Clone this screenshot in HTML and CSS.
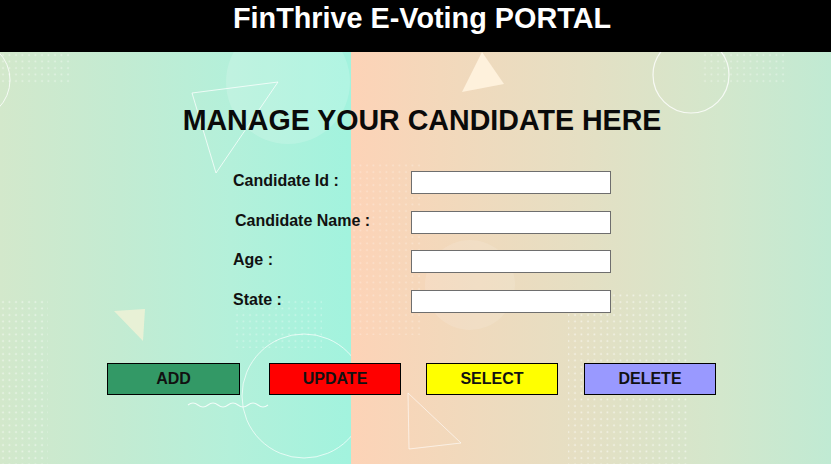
FILE: index.html
```html
<!DOCTYPE html>
<html lang="en">
<head>
<meta charset="utf-8">
<title>FinThrive E-Voting PORTAL</title>
<link rel="stylesheet" href="styles.css">
</head>
<body>
<header class="topbar">FinThrive E-Voting PORTAL</header>
<main class="stage">
  <svg class="decor" width="831" height="412" viewBox="0 52 831 412" aria-hidden="true">
    <defs>
      <pattern id="dots" width="6.5" height="6.5" patternUnits="userSpaceOnUse">
        <circle cx="3" cy="3" r="0.9" fill="#ffffff"/>
      </pattern>
      <clipPath id="leftHalf">
        <rect x="0" y="52" width="351" height="412"/>
      </clipPath>
      <clipPath id="rightHalf">
        <rect x="351" y="52" width="480" height="412"/>
      </clipPath>
    </defs>
    <g clip-path="url(#leftHalf)">
      <rect x="0" y="52" width="72" height="34" fill="url(#dots)" opacity="0.45"/>
      <rect x="0" y="300" width="48" height="164" fill="url(#dots)" opacity="0.55"/>
      <rect x="232" y="300" width="90" height="48" fill="url(#dots)" opacity="0.35"/>
      <circle cx="288" cy="82" r="62" fill="#ffffff" opacity="0.16"/>
      <circle cx="-30" cy="80" r="40" fill="none" stroke="#ffffff" stroke-width="1" opacity="0.8"/>
      <circle cx="304" cy="396" r="62" fill="none" stroke="#ffffff" stroke-width="1" opacity="0.7"/>
      <polygon points="192,93 278,82 216,173" fill="none" stroke="#ffffff" stroke-width="1" opacity="0.75"/>
      <polygon points="114,311 145,309 143,341" fill="#ecf2d6" opacity="0.9"/>
      <path d="M188,405 q5,-4 10,0 t10,0 t10,0 t10,0 t10,0 t10,0 t10,0 t10,0" fill="none" stroke="#ffffff" stroke-width="1.2" opacity="0.8"/>
    </g>
    <g clip-path="url(#rightHalf)">
      <rect x="352" y="160" width="70" height="175" fill="url(#dots)" opacity="0.3"/>
      <rect x="568" y="290" width="120" height="174" fill="url(#dots)" opacity="0.6"/>
      <rect x="700" y="52" width="85" height="34" fill="url(#dots)" opacity="0.4"/>
      <circle cx="470" cy="285" r="45" fill="#ffffff" opacity="0.12"/>
      <circle cx="691" cy="75" r="38" fill="none" stroke="#ffffff" stroke-width="1.2" opacity="0.8"/>
      <polygon points="482,52 504,84 462,92" fill="#fff3df" opacity="0.9"/>
      <polygon points="408,393 461,443 409,449" fill="none" stroke="#ffffff" stroke-width="1" opacity="0.6"/>
    </g>
  </svg>

  <h1 class="title">MANAGE YOUR CANDIDATE HERE</h1>

  <form class="form">
    <label class="label" for="cid">Candidate Id :</label>
    <input class="field" id="cid" type="text">
    <label class="label label-shift" for="cname">Candidate Name :</label>
    <input class="field" id="cname" type="text">
    <label class="label" for="cage">Age :</label>
    <input class="field" id="cage" type="text">
    <label class="label" for="cstate">State :</label>
    <input class="field" id="cstate" type="text">
  </form>

  <div class="actions">
    <button class="btn btn-add" type="button">ADD</button>
    <button class="btn btn-update" type="button">UPDATE</button>
    <button class="btn btn-select" type="button">SELECT</button>
    <button class="btn btn-delete" type="button">DELETE</button>
  </div>
</main>
</body>
</html>
```

FILE: styles.css
```css
* {
  box-sizing: border-box;
}

html, body {
  margin: 0;
  padding: 0;
}

body {
  width: 831px;
  height: 464px;
  overflow: hidden;
  font-family: "Liberation Sans", Arial, sans-serif;
  color: #000;
}

.topbar {
  height: 52px;
  background: #000;
  color: #fff;
  font-weight: bold;
  font-size: 28.8px;
  line-height: 36px;
  text-align: center;
  padding-left: 13px;
}

.stage {
  position: relative;
  height: 412px;
  padding-left: 13px;
  padding-top: 52px;
  background: linear-gradient(to right,
    #d3e8cb 0px,
    #c3ebd2 120px,
    #b4f0da 230px,
    #a2f3de 351px,
    #fdd3b7 351px,
    #f3d8bb 440px,
    #e5dfc3 580px,
    #d3e7cc 720px,
    #c0ead3 831px);
}

.decor {
  position: absolute;
  left: 0;
  top: 0;
  z-index: 0;
}

.title,
.form,
.actions {
  position: relative;
  z-index: 1;
}

.title {
  margin: 0 0 34px 0;
  font-size: 28.6px;
  font-weight: bold;
  line-height: 33px;
  text-align: center;
  color: #0a0a0a;
}

.form {
  display: grid;
  grid-template-columns: 178px 200px;
  row-gap: 16.5px;
  justify-content: center;
  margin: 0;
}

.label {
  font-size: 16px;
  font-weight: bold;
  line-height: 20px;
  color: #111;
}

.label-shift {
  padding-left: 2px;
}

.field {
  width: 200px;
  height: 23px;
  margin: 0;
  padding: 1px 3px;
  border: 1px solid #6e6e6e;
  border-radius: 0;
  background: #fff;
  font-family: "Liberation Sans", Arial, sans-serif;
  font-size: 13px;
}

.actions {
  display: flex;
  margin-top: 50.5px;
  margin-left: -13px;
  padding-left: 107px;
}

.btn {
  width: 132px;
  height: 32px;
  margin: 0;
  padding: 0;
  border: 1px solid #000;
  border-radius: 0;
  font-family: "Liberation Sans", Arial, sans-serif;
  font-size: 16px;
  font-weight: bold;
  color: #111;
  text-align: center;
}

.btn-add {
  width: 133px;
  background: #339966;
}

.btn-update {
  margin-left: 29px;
  background: #ff0000;
}

.btn-select {
  margin-left: 25px;
  background: #ffff00;
}

.btn-delete {
  margin-left: 26px;
  background: #9999ff;
}
```
